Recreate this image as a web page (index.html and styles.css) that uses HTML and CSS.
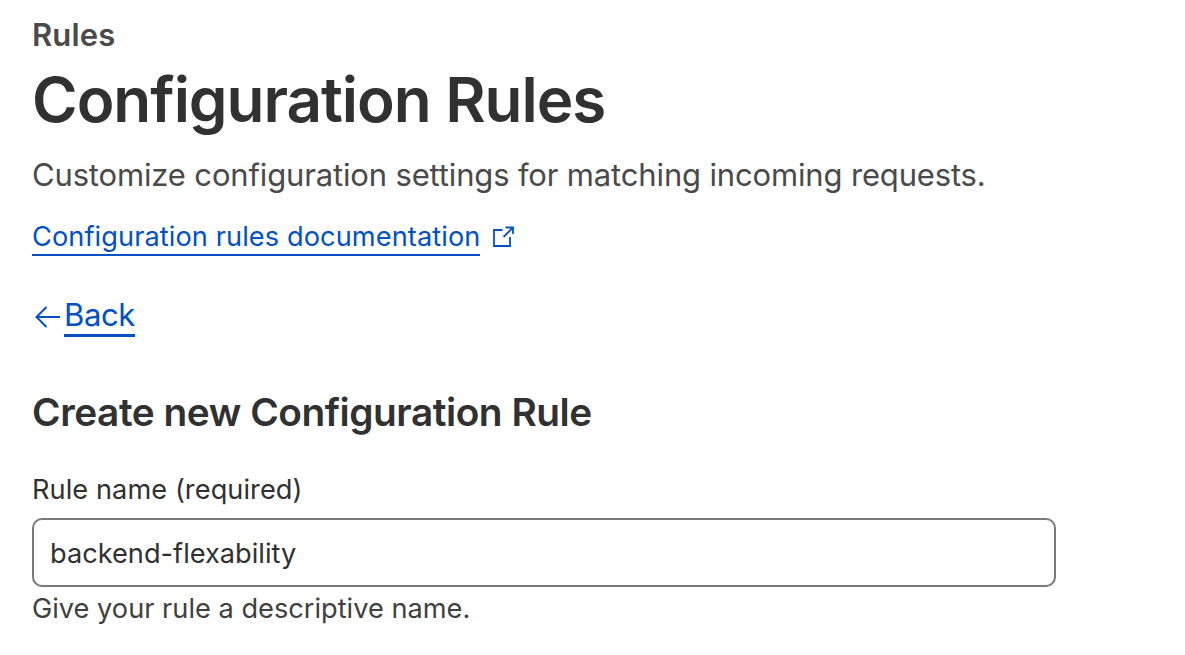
FILE: index.html
```html
<!DOCTYPE html>
<html lang="en">
<head>
<meta charset="utf-8">
<title>Configuration Rules</title>
<link rel="stylesheet" href="styles.css">
</head>
<body>
<main class="page">
  <p class="section"><span>Rules</span></p>
  <h1 class="title"><span>Configuration Rules</span></h1>
  <p class="description"><span>Customize configuration settings for matching incoming requests.</span></p>
  <div class="docs">
    <a class="docs-link" href="#">Configuration rules documentation</a>
    <svg class="external" viewBox="0 0 22 22" aria-hidden="true"><path d="M9.5 4H1v16h16v-9M12.5 1.5H20V8M20 1.5 10.5 11"/></svg>
  </div>
  <div class="back">
    <svg class="arrow" viewBox="0 0 26 22" aria-hidden="true"><path d="M26 11H2.5M12.5 1l-10 10 10 10"/></svg>
    <a class="back-link" href="#">Back</a>
  </div>
  <h2 class="heading"><span>Create new Configuration Rule</span></h2>
  <form class="form">
    <label class="label" for="name">Rule name (required)</label>
    <input class="input" id="name" type="text" value="backend-flexability">
    <p class="help"><span>Give your rule a descriptive name.</span></p>
  </form>
</main>
</body>
</html>
```
FILE: styles.css
```css
* { box-sizing: border-box; }
body { margin: 0; background: #fff; color: #313131; font-family: Inter, "Liberation Sans", sans-serif; }
p, h1, h2 { margin: 0; }
.page { padding: 15px 32px 0; white-space: nowrap; }
.section { font-size: 31px; line-height: 40px; font-weight: 600; color: #4a4a4a; letter-spacing: 0.15px; }
.title { font-size: 62px; line-height: 80px; font-weight: 600; margin-top: 5px; letter-spacing: -1.05px; }
.description { font-size: 31px; line-height: 48px; margin-top: 11px; color: #4a4a4a; letter-spacing: -0.155px; }
.docs { display: flex; align-items: flex-start; height: 37px; margin-top: 20px; gap: 13px; }
.docs-link { font-size: 27.2px; line-height: 36px; height: 37px; color: #0051c3; text-decoration: none; border-bottom: 2px solid #0051c3; letter-spacing: 0.08px; }
.external { width: 22px; height: 22px; margin-top: 7px; }
.external path, .arrow path { fill: none; stroke: #0051c3; stroke-width: 2; }
.external path { stroke-width: 1.8; }
.back { display: flex; align-items: flex-start; height: 42px; margin-top: 39px; gap: 4px; padding-left: 2px; }
.arrow { width: 26px; height: 22px; margin-top: 11px; }
.back-link { font-size: 31px; line-height: 40px; height: 42px; color: #0051c3; text-decoration: none; border-bottom: 3px solid #0051c3; letter-spacing: -0.4px; }
.heading { font-size: 38.8px; line-height: 50px; font-weight: 600; margin-top: 50px; letter-spacing: -0.46px; }
.form { display: flex; flex-direction: column; margin-top: 35px; }
.label { font-size: 27.2px; line-height: 36px; letter-spacing: 0.06px; }
.input { width: 1024px; height: 69px; margin-top: 10px; padding: 1px 16px 0; border: 2px solid #797979; border-radius: 10px; font: 27.2px Inter, sans-serif; color: #313131; outline: 0; }
.help { font-size: 27.2px; line-height: 36px; margin-top: 4px; color: #404040; }
```
